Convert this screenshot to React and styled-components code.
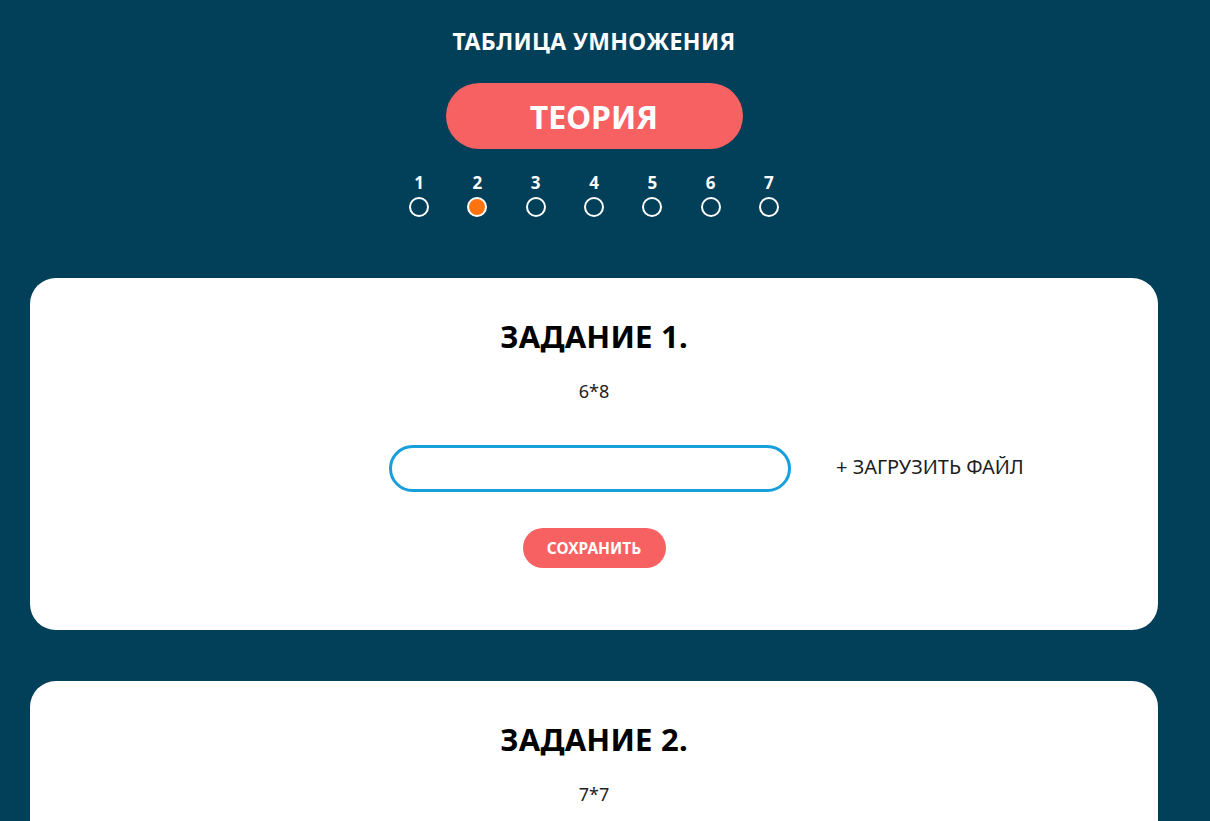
import React, { useState } from 'react';
import styled, { createGlobalStyle } from 'styled-components';

const GlobalStyle = createGlobalStyle`
  html, body {
    margin: 0;
    padding: 0;
    background: #023f59;
  }
  body {
    font-family: "Noto Sans", "Open Sans", sans-serif;
  }
  * { box-sizing: border-box; }
`

const Page = styled.div`
  width: 1188px;
  padding: 27px 30px 40px;
`

const Header = styled.header`
  display: flex;
  flex-direction: column;
  align-items: center;
`

const Title = styled.h1`
  margin: 0;
  font-size: 23px;
  line-height: 28px;
  letter-spacing: 0.4px;
  font-weight: 700;
  color: #fff;
`

const TheoryButton = styled.button`
  margin-top: 28px;
  width: 297px;
  height: 66px;
  border: none;
  border-radius: 33px;
  background: #f86161;
  color: #fff;
  font-family: inherit;
  font-size: 32px;
  font-weight: 700;
  cursor: pointer;
`

const Steps = styled.div`
  margin-top: 24px;
  display: flex;
  gap: 38.3px;
`

const Step = styled.div`
  width: 20px;
  display: flex;
  flex-direction: column;
  align-items: center;
  gap: 4px;
  color: #fff;
  font-size: 17px;
  line-height: 20px;
  font-weight: 700;
  cursor: pointer;
`

const Dot = styled.span`
  width: 20px;
  height: 20px;
  border-radius: 50%;
  border: 2px solid #fff;
  background: ${p => (p.$active ? '#ff7410' : 'transparent')};
`

const Cards = styled.main`
  margin-top: 61px;
  display: flex;
  flex-direction: column;
  gap: 51px;
`

const Card = styled.section`
  background: #fff;
  border-radius: 26px;
  padding: 39px 0 62px;
  display: flex;
  flex-direction: column;
  align-items: center;
`

const TaskTitle = styled.h2`
  margin: 0;
  font-size: 31px;
  line-height: 38px;
  letter-spacing: 0.2px;
  font-weight: 700;
  color: #000;
`

const Question = styled.p`
  margin: 24px 0 0;
  font-size: 18px;
  line-height: 24px;
  color: #222;
`

const AnswerRow = styled.div`
  margin-top: 42px;
  width: 100%;
  display: grid;
  grid-template-columns: 1fr 402px 1fr;
  align-items: center;
  transform: translateX(-4px);
`

const AnswerInput = styled.input`
  grid-column: 2;
  height: 47px;
  margin: 0;
  border: 3px solid #179fdb;
  border-radius: 24px;
  padding: 0 18px;
  font-family: inherit;
  font-size: 18px;
  outline: none;
`

const Upload = styled.label`
  grid-column: 3;
  margin: 0 0 4px 45px;
  font-size: 20px;
  line-height: 24px;
  color: #1d1d1d;
  cursor: pointer;
  white-space: nowrap;
`

const SaveButton = styled.button`
  margin-top: 36px;
  width: 143px;
  height: 40px;
  border: none;
  border-radius: 20px;
  background: #f86161;
  color: #fff;
  font-family: inherit;
  font-size: 15.5px;
  font-weight: 700;
  cursor: pointer;
`

const tasks = [
  { id: 1, q: '6*8' },
  { id: 2, q: '7*7' },
]

const TaskCard = ({ id, q }) => (
  <Card>
    <TaskTitle>ЗАДАНИЕ {id}.</TaskTitle>
    <Question>{q}</Question>
    <AnswerRow>
      <AnswerInput />
      <Upload>+ ЗАГРУЗИТЬ ФАЙЛ</Upload>
    </AnswerRow>
    <SaveButton>СОХРАНИТЬ</SaveButton>
  </Card>
)

export default function App() {
  const [step, setStep] = useState(2)

  return (
    <Page>
      <GlobalStyle />
      <Header>
        <Title>ТАБЛИЦА УМНОЖЕНИЯ</Title>
        <TheoryButton>ТЕОРИЯ</TheoryButton>
        <Steps>
          {[1, 2, 3, 4, 5, 6, 7].map(n => (
            <Step key={n} onClick={() => setStep(n)}>
              {n}
              <Dot $active={n === step} />
            </Step>
          ))}
        </Steps>
      </Header>
      <Cards>
        {tasks.map(t => <TaskCard key={t.id} {...t} />)}
      </Cards>
    </Page>
  )
}
